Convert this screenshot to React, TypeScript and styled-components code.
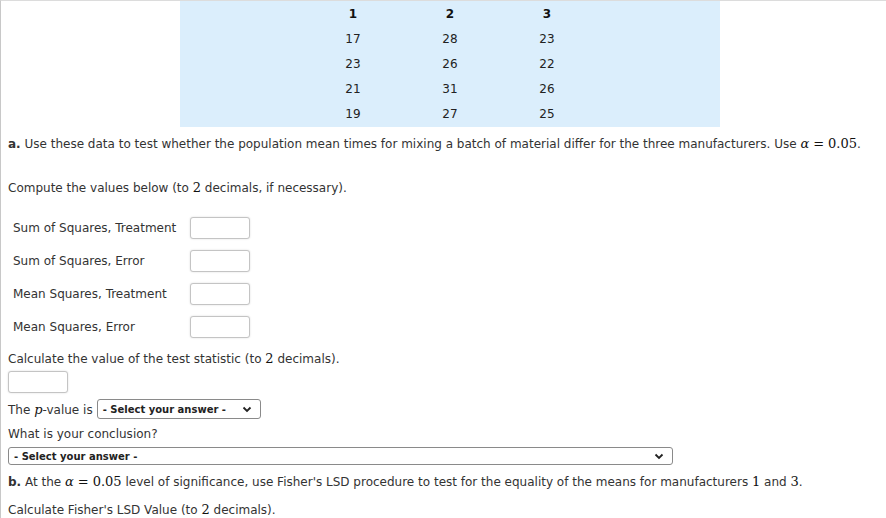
import styled, { createGlobalStyle } from "styled-components";

const GlobalStyle = createGlobalStyle`
  html, body {
    margin: 0;
    padding: 0;
    background: #fff;
  }
  body {
    font-family: "DejaVu Sans", Verdana, sans-serif;
    font-size: 12px;
    color: #333;
  }
`;

const data = [
  [17, 28, 23],
  [23, 26, 22],
  [21, 31, 26],
  [19, 27, 25],
];

const fields = [
  "Sum of Squares, Treatment",
  "Sum of Squares, Error",
  "Mean Squares, Treatment",
  "Mean Squares, Error",
];

const Chevron = () => (
  <svg width="10" height="7" viewBox="0 0 10 7">
    <path d="M1.5 1.5 L5 5 L8.5 1.5" fill="none" stroke="#222" strokeWidth="1.8" />
  </svg>
);

const Alpha = () => (
  <Math>
    <i>α</i>
    <Eq>=</Eq>0.05
  </Math>
);

const App = () => {
  return (
    <Page>
      <GlobalStyle />
      <DataPanel>
        <DataTable>
          <thead>
            <tr>
              <HeadCell>1</HeadCell>
              <HeadCell>2</HeadCell>
              <HeadCell>3</HeadCell>
            </tr>
          </thead>
          <tbody>
            {data.map((row, i) => (
              <tr key={i}>
                {row.map((v, j) => (
                  <Cell key={j}>{v}</Cell>
                ))}
              </tr>
            ))}
          </tbody>
        </DataTable>
      </DataPanel>

      <Body>
        <Para $top={8}>
          <b>a.</b> Use these data to test whether the population mean times for mixing a
          batch of material differ for the three manufacturers. Use <Alpha />.
        </Para>

        <Para $top={26}>
          Compute the values below (to <Math>2</Math> decimals, if necessary).
        </Para>

        <FieldTable>
          <tbody>
            {fields.map((f) => (
              <FieldRow key={f}>
                <FieldLabel>{f}</FieldLabel>
                <InputCell>
                  <Input />
                </InputCell>
              </FieldRow>
            ))}
          </tbody>
        </FieldTable>

        <Para $top={7}>
          Calculate the value of the test statistic (to <Math>2</Math> decimals).
        </Para>
        <StatInput />

        <InlineRow>
          <span>
            The <Math><i>p</i></Math>-value is
          </span>
          <Select $width={164}>
            <span>- Select your answer -</span>
            <Chevron />
          </Select>
        </InlineRow>

        <Para $top={7}>What is your conclusion?</Para>
        <Select $width={665} $block>
          <span>- Select your answer -</span>
          <Chevron />
        </Select>

        <Para $top={8}>
          <b>b.</b> At the <Alpha /> level of significance, use Fisher's LSD procedure to
          test for the equality of the means for manufacturers <Math>1</Math> and{" "}
          <Math>3</Math>.
        </Para>

        <Para $top={10}>
          Calculate Fisher's LSD Value (to <Math>2</Math> decimals).
        </Para>
      </Body>
    </Page>
  );
};

export default App;

const Page = styled.div`
  width: 886px;
  height: 518px;
  box-sizing: border-box;
  border-top: 1px solid #dcdcdc;
  border-left: 1px solid #c8c8c8;
  overflow: hidden;
`;

const DataPanel = styled.div`
  margin-left: 179px;
  width: 540px;
  height: 126px;
  background: #dbeefc;
  display: flex;
  justify-content: center;
`;

const DataTable = styled.table`
  border-collapse: collapse;
`;

const HeadCell = styled.th`
  width: 97px;
  height: 25px;
  padding: 0;
  text-align: center;
  font-weight: bold;
  color: #111;
`;

const Cell = styled.td`
  height: 25px;
  padding: 0;
  text-align: center;
  color: #222;
`;

const Body = styled.div`
  padding-left: 7px;
`;

const Para = styled.div<{ $top: number }>`
  margin-top: ${(p) => p.$top}px;
  line-height: 17px;
  white-space: nowrap;
`;

const Math = styled.span`
  font-family: "DejaVu Serif", "Liberation Serif", serif;
  font-size: 13px;
  color: #111;
`;

const Eq = styled.span`
  margin: 0 4px;
`;

const FieldTable = styled.table`
  border-collapse: collapse;
  margin-top: 14px;
  margin-left: 5px;
`;

const FieldRow = styled.tr`
  height: 33px;
`;

const FieldLabel = styled.td`
  width: 177px;
  padding: 0;
  white-space: nowrap;
`;

const InputCell = styled.td`
  padding: 0;
`;

const Input = styled.div`
  width: 58px;
  height: 20px;
  border: 1px solid #c4c4c4;
  border-radius: 3px;
  box-shadow: 0 0 2px rgba(0, 0, 0, 0.15);
  background: #fff;
`;

const StatInput = styled(Input)`
  margin-top: 3px;
`;

const InlineRow = styled.div`
  display: flex;
  align-items: center;
  gap: 4px;
  margin-top: 6px;
  height: 20px;
`;

const Select = styled.div<{ $width: number; $block?: boolean }>`
  width: ${(p) => p.$width}px;
  height: ${(p) => (p.$block ? "18px" : "20px")};
  box-sizing: border-box;
  margin-top: ${(p) => (p.$block ? "4px" : "0")};
  border: 1px solid #8a8a8a;
  border-radius: 3px;
  background: #fff;
  display: flex;
  align-items: center;
  justify-content: space-between;
  padding: 0 8px 0 5px;
  font-size: 10px;
  font-weight: bold;
  color: #222;
`;
